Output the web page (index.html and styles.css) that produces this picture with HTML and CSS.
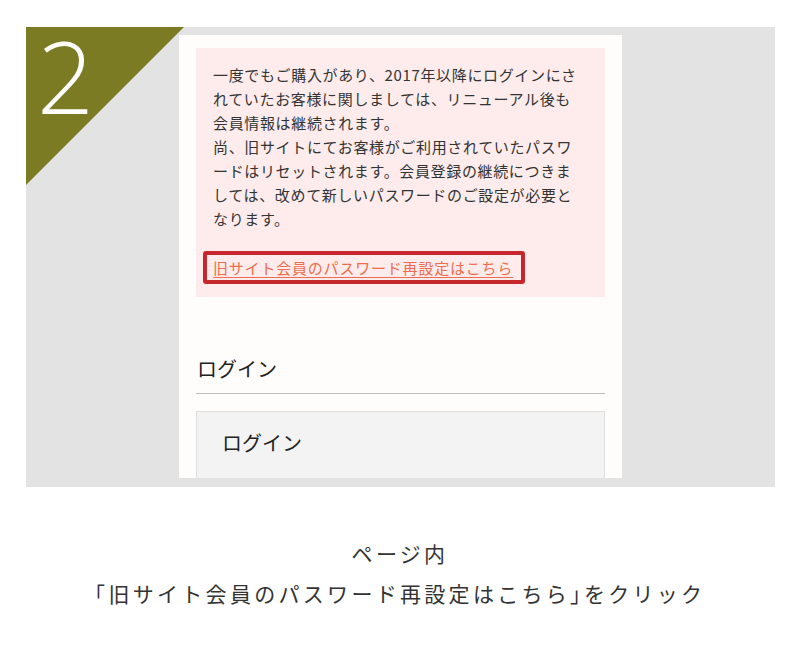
FILE: index.html
```html
<!DOCTYPE html>
<html lang="ja">
<head>
<meta charset="utf-8">
<title>Step 2</title>
<link rel="stylesheet" href="styles.css">
</head>
<body>
<div class="stage">
  <div class="corner"></div>
  <div class="step-num">2</div>
  <div class="screen">
    <div class="notice">
      <p class="notice-text">一度でもご購入があり、2017年以降にログインにさ<br>れていたお客様に関しましては、リニューアル後も<br>会員情報は継続されます。<br>尚、旧サイトにてお客様がご利用されていたパスワ<br>ードはリセットされます。会員登録の継続につきま<br>しては、改めて新しいパスワードのご設定が必要と<br>なります。</p>
      <span class="highlight"><a class="reset-link" href="#">旧サイト会員のパスワード再設定はこちら</a></span>
    </div>
    <h2 class="section-title">ログイン</h2>
    <div class="login-box">ログイン</div>
  </div>
</div>
<p class="caption">ページ内<br><span class="bracket">「</span>旧サイト会員のパスワード再設定はこちら<span class="bracket">」</span>をクリック</p>
</body>
</html>
```
FILE: styles.css
```css
html, body {
  margin: 0;
  padding: 0;
  background: #ffffff;
}
body {
  font-family: "Noto Sans CJK JP", "Noto Sans", sans-serif;
  color: #333333;
}
.stage {
  position: relative;
  margin: 27px 0 0 26px;
  width: 749px;
  height: 460px;
  background: #e3e3e3;
  display: flex;
  justify-content: center;
  align-items: flex-start;
}
.corner {
  position: absolute;
  left: 0;
  top: 0;
  width: 158px;
  height: 158px;
  background: #7a7b23;
  clip-path: polygon(0 0, 100% 0, 0 100%);
  z-index: 1;
}
.step-num {
  position: absolute;
  left: 11px;
  top: -2px;
  z-index: 2;
  font-family: "Open Sans", "DejaVu Sans", sans-serif;
  font-weight: 300;
  font-size: 100px;
  line-height: 1;
  color: #ffffff;
}
.screen {
  box-sizing: border-box;
  margin-top: 8px;
  width: 443px;
  height: 443px;
  padding: 13px 17px 0;
  background: #fffcfc;
  overflow: hidden;
  flex: none;
}
.notice {
  background: #fdeceb;
  padding: 15px 17px 13px;
}
.notice-text {
  margin: 0 0 20px;
  font-size: 15px;
  line-height: 24px;
  letter-spacing: 0.65px;
  color: #333333;
  white-space: nowrap;
}
.highlight {
  display: inline-block;
  margin-left: -10px;
  border: 4px solid #c8262d;
  border-radius: 3px;
  padding: 0 8px 0 6px;
  line-height: 24px;
  vertical-align: top;
}
.reset-link {
  font-size: 15px;
  letter-spacing: 0.8px;
  color: #f06c4c;
  text-decoration: underline;
  text-underline-offset: 3px;
  text-decoration-thickness: 1px;
  white-space: nowrap;
}
.section-title {
  margin: 57px 0 0;
  font-size: 20px;
  font-weight: 400;
  line-height: 30px;
  padding: 0 0 9px 1px;
  border-bottom: 1px solid #bcbcbc;
  color: #222222;
}
.login-box {
  margin-top: 17px;
  height: 120px;
  background: #f3f3f3;
  border: 1px solid #dddddd;
  padding: 16px 0 0 25px;
  font-size: 20px;
  line-height: 30px;
  color: #222222;
}
.caption {
  margin: 46px 0 0;
  text-align: center;
  font-size: 21px;
  line-height: 40px;
  letter-spacing: 3.3px;
  color: #333333;
}
.bracket {
  font-feature-settings: "halt";
}
```
